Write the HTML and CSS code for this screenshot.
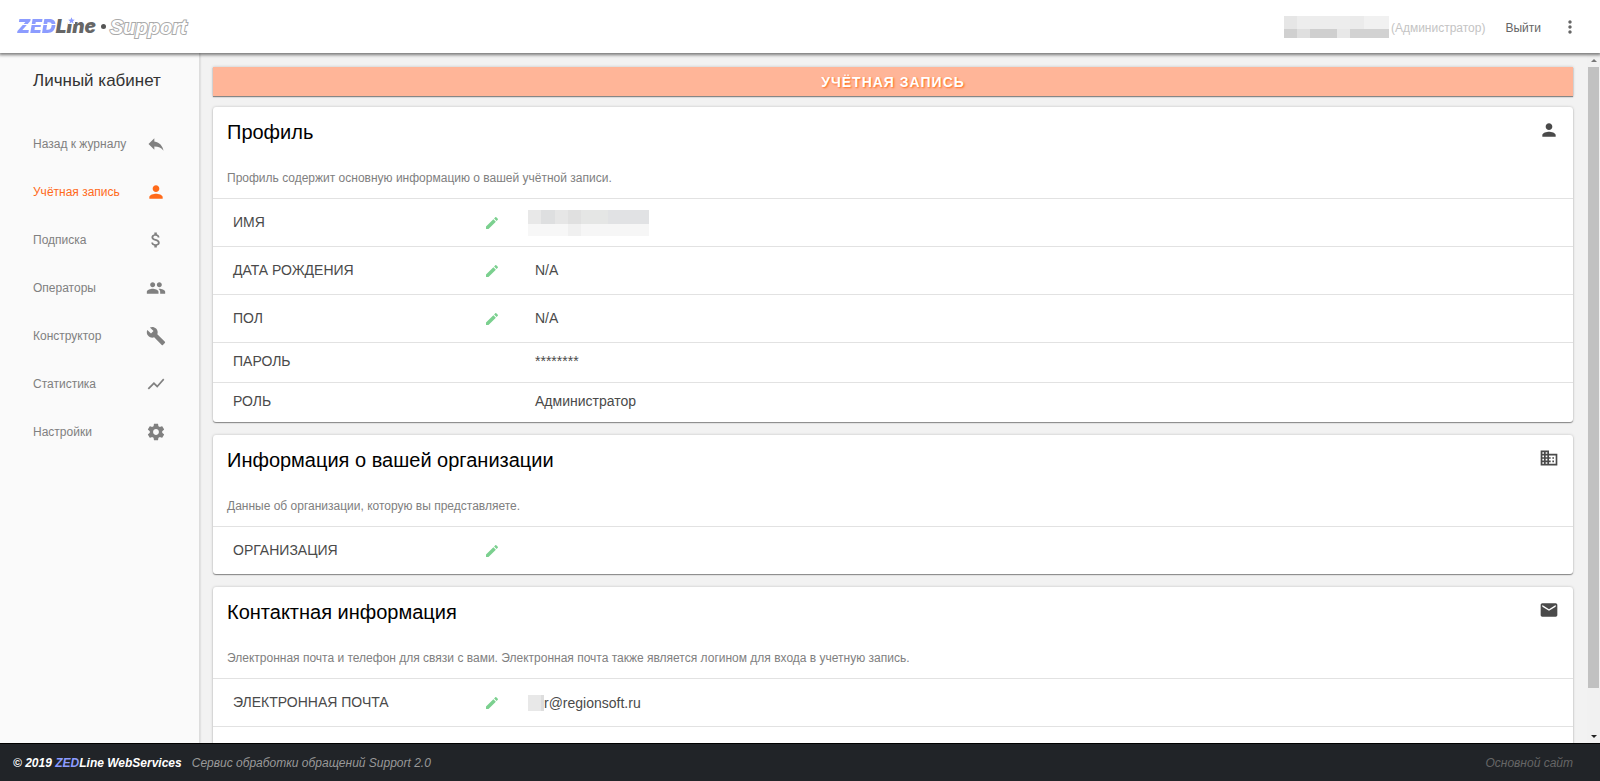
FILE: index.html
```html
<!DOCTYPE html>
<html lang="ru">
<head>
<meta charset="utf-8">
<title>ZEDLine Support</title>
<link rel="stylesheet" href="styles.css">
</head>
<body>
<svg class="sprite" aria-hidden="true">
  <symbol id="i-person" viewBox="0 0 24 24"><path d="M12 12c2.21 0 4-1.79 4-4s-1.79-4-4-4-4 1.79-4 4 1.79 4 4 4zm0 2c-2.67 0-8 1.34-8 4v2h16v-2c0-2.66-5.33-4-8-4z"/></symbol>
  <symbol id="i-reply" viewBox="0 0 24 24"><path d="M10 9V5l-7 7 7 7v-4.1c5 0 8.500 1.600 11 5.100-1-5-4-10-11-11z"/></symbol>
  <symbol id="i-money" viewBox="0 0 24 24"><path d="M11.800 10.900c-2.270-.59-3-1.200-3-2.150 0-1.090 1.010-1.850 2.700-1.850 1.780 0 2.440.85 2.500 2.100h2.210c-.07-1.720-1.120-3.300-3.210-3.810V3h-3v2.160c-1.940.42-3.500 1.680-3.500 3.610 0 2.310 1.910 3.460 4.700 4.130 2.500.6 3 1.480 3 2.410 0 .69-.49 1.790-2.700 1.790-2.060 0-2.870-.92-2.980-2.100h-2.200c.12 2.190 1.760 3.420 3.680 3.830V21h3v-2.150c1.950-.37 3.500-1.500 3.500-3.550 0-2.840-2.430-3.810-4.700-4.400z"/></symbol>
  <symbol id="i-people" viewBox="0 0 24 24"><path d="M16 11c1.660 0 2.990-1.340 2.990-3S17.660 5 16 5s-3 1.340-3 3 1.340 3 3 3zm-8 0c1.660 0 2.990-1.340 2.990-3S9.660 5 8 5 5 6.340 5 8s1.340 3 3 3zm0 2c-2.330 0-7 1.170-7 3.500V19h14v-2.500c0-2.330-4.670-3.500-7-3.500zm8 0c-.29 0-.62.02-.97.050 1.160.84 1.970 1.970 1.970 3.450V19h6v-2.500c0-2.330-4.670-3.500-7-3.500z"/></symbol>
  <symbol id="i-build" viewBox="0 0 24 24"><path d="M22.700 19l-9.100-9.100c.9-2.300.4-5-1.500-6.900-2-2-5-2.400-7.400-1.300L9 6 6 9 1.600 4.700C.4 7.100.9 10.100 2.900 12.100c1.900 1.900 4.600 2.400 6.900 1.500l9.100 9.100c.4.4 1 .4 1.400 0l2.300-2.300c.5-.4.5-1.100.1-1.400z"/></symbol>
  <symbol id="i-chart" viewBox="0 0 24 24"><path d="M3.500 18.490l6-6.010 4 4L22 6.920l-1.410-1.410-7.090 7.970-4-4L2 16.990z"/></symbol>
  <symbol id="i-settings" viewBox="0 0 24 24"><path d="M19.430 12.980c.04-.32.07-.64.07-.98s-.03-.66-.07-.98l2.110-1.650c.19-.15.24-.42.12-.64l-2-3.460c-.12-.22-.39-.3-.61-.22l-2.490 1c-.52-.4-1.080-.73-1.690-.98l-.38-2.650C14.460 2.180 14.250 2 14 2h-4c-.25 0-.46.18-.49.42l-.38 2.650c-.61.25-1.170.59-1.690.98l-2.490-1c-.23-.09-.49 0-.61.22l-2 3.460c-.13.22-.07.49.12.64l2.110 1.650c-.04.32-.07.65-.07.98s.03.66.07.98l-2.110 1.650c-.19.15-.24.42-.12.64l2 3.460c.12.22.39.3.61.22l2.490-1c.52.4 1.080.73 1.690.98l.38 2.650c.03.24.24.42.49.42h4c.25 0 .46-.18.49-.42l.38-2.650c.61-.25 1.170-.59 1.690-.98l2.490 1c.23.09.49 0 .61-.22l2-3.460c.12-.22.07-.49-.12-.64l-2.110-1.650zM12 15.500c-1.930 0-3.500-1.570-3.500-3.500s1.570-3.500 3.500-3.500 3.500 1.570 3.500 3.500-1.570 3.500-3.500 3.500z"/></symbol>
  <symbol id="i-edit" viewBox="0 0 24 24"><path d="M3 17.250V21h3.750L17.810 9.940l-3.750-3.750L3 17.250zM20.710 7.040c.39-.39.39-1.020 0-1.410l-2.340-2.340c-.39-.39-1.020-.39-1.410 0l-1.830 1.830 3.750 3.750 1.830-1.830z"/></symbol>
  <symbol id="i-business" viewBox="0 0 24 24"><path d="M12 7V3H2v18h20V7H12zM6 19H4v-2h2v2zm0-4H4v-2h2v2zm0-4H4V9h2v2zm0-4H4V5h2v2zm4 12H8v-2h2v2zm0-4H8v-2h2v2zm0-4H8V9h2v2zm0-4H8V5h2v2zm10 12h-8v-2h2v-2h-2v-2h2v-2h-2V9h8v10zm-2-8h-2v2h2v-2zm0 4h-2v2h2v-2z"/></symbol>
  <symbol id="i-mail" viewBox="0 0 24 24"><path d="M20 4H4c-1.100 0-1.990.9-1.990 2L2 18c0 1.100.9 2 2 2h16c1.100 0 2-.9 2-2V6c0-1.100-.9-2-2-2zm0 4l-8 5-8-5V6l8 5 8-5v2z"/></symbol>
  <symbol id="i-more" viewBox="0 0 24 24"><path d="M12 8c1.100 0 2-.9 2-2s-.9-2-2-2-2 .9-2 2 .9 2 2 2zm0 2c-1.100 0-2 .9-2 2s.9 2 2 2 2-.9 2-2-.9-2-2-2zm0 6c-1.100 0-2 .9-2 2s.9 2 2 2 2-.9 2-2-.9-2-2-2z"/></symbol>
  <symbol id="i-star" viewBox="0 0 24 24"><path d="M12 1l3.200 7.300 7.800.7-5.900 5.200 1.800 7.800L12 17.900 5.100 22l1.800-7.800L1 9l7.800-.7z"/></symbol>
</svg>

<header class="topbar">
  <a class="logo" href="#"><span class="logo-zed">ZED</span><span class="logo-line">L<span class="logo-i">i<svg class="logo-star"><use href="#i-star"/></svg></span>ne</span><span class="logo-dot"></span><span class="logo-support">Support</span></a>
  <div class="user">
    <span class="mask mask-user"></span>
    <span class="user-role">(Администратор)</span>
  </div>
  <a class="logout" href="#">Выйти</a>
  <button class="icon-button" type="button" aria-label="Меню"><svg class="icon"><use href="#i-more"/></svg></button>
</header>

<div class="body">
  <aside class="sidebar">
    <h1 class="sidebar-title">Личный кабинет</h1>
    <nav class="menu">
      <a class="menu-item" href="#">Назад к журналу<svg class="icon"><use href="#i-reply"/></svg></a>
      <a class="menu-item active" href="#">Учётная запись<svg class="icon"><use href="#i-person"/></svg></a>
      <a class="menu-item" href="#">Подписка<svg class="icon"><use href="#i-money"/></svg></a>
      <a class="menu-item" href="#">Операторы<svg class="icon"><use href="#i-people"/></svg></a>
      <a class="menu-item" href="#">Конструктор<svg class="icon"><use href="#i-build"/></svg></a>
      <a class="menu-item" href="#">Статистика<svg class="icon"><use href="#i-chart"/></svg></a>
      <a class="menu-item" href="#">Настройки<svg class="icon"><use href="#i-settings"/></svg></a>
    </nav>
  </aside>

  <main class="content">
    <h2 class="banner">УЧЁТНАЯ ЗАПИСЬ</h2>

    <section class="card">
      <div class="card-head">
        <h3 class="card-title">Профиль</h3>
        <svg class="icon"><use href="#i-person"/></svg>
      </div>
      <p class="card-note">Профиль содержит основную информацию о вашей учётной записи.</p>
      <dl class="fields">
        <div class="row"><dt>ИМЯ</dt><dd class="action"><button class="icon-button edit" type="button" aria-label="Изменить имя"><svg class="icon"><use href="#i-edit"/></svg></button></dd><dd class="masked"><span class="mask mask-name"></span></dd></div>
        <div class="row"><dt>ДАТА РОЖДЕНИЯ</dt><dd class="action"><button class="icon-button edit" type="button" aria-label="Изменить дату рождения"><svg class="icon"><use href="#i-edit"/></svg></button></dd><dd class="value">N/A</dd></div>
        <div class="row"><dt>ПОЛ</dt><dd class="action"><button class="icon-button edit" type="button" aria-label="Изменить пол"><svg class="icon"><use href="#i-edit"/></svg></button></dd><dd class="value">N/A</dd></div>
        <div class="row short"><dt>ПАРОЛЬ</dt><dd class="action"></dd><dd class="value">********</dd></div>
        <div class="row short"><dt>РОЛЬ</dt><dd class="action"></dd><dd class="value">Администратор</dd></div>
      </dl>
    </section>

    <section class="card">
      <div class="card-head">
        <h3 class="card-title">Информация о вашей организации</h3>
        <svg class="icon"><use href="#i-business"/></svg>
      </div>
      <p class="card-note">Данные об организации, которую вы представляете.</p>
      <dl class="fields">
        <div class="row"><dt>ОРГАНИЗАЦИЯ</dt><dd class="action"><button class="icon-button edit" type="button" aria-label="Изменить организацию"><svg class="icon"><use href="#i-edit"/></svg></button></dd><dd class="value"></dd></div>
      </dl>
    </section>

    <section class="card">
      <div class="card-head">
        <h3 class="card-title">Контактная информация</h3>
        <svg class="icon"><use href="#i-mail"/></svg>
      </div>
      <p class="card-note">Электронная почта и телефон для связи с вами. Электронная почта также является логином для входа в учетную запись.</p>
      <dl class="fields">
        <div class="row"><dt>ЭЛЕКТРОННАЯ ПОЧТА</dt><dd class="action"><button class="icon-button edit" type="button" aria-label="Изменить почту"><svg class="icon"><use href="#i-edit"/></svg></button></dd><dd class="masked"><span class="mask mask-mail"></span>r@regionsoft.ru</dd></div>
        <div class="row"></div>
      </dl>
    </section>
  </main>

  <div class="scrollbar" aria-hidden="true">
    <span class="arrow up"></span>
    <span class="thumb"></span>
    <span class="arrow down"></span>
  </div>
</div>

<footer class="footer">
  <strong class="copyright">© 2019 <span class="brand">ZED</span>Line WebServices</strong>
  <span class="service">Сервис обработки обращений Support 2.0</span>
  <a class="site-link" href="#">Основной сайт</a>
</footer>
</body>
</html>
```

FILE: styles.css
```css
* { box-sizing: border-box; }

body {
  margin: 0;
  height: 100vh;
  display: flex;
  flex-direction: column;
  overflow: hidden;
  font-family: "Liberation Sans", Arial, sans-serif;
  font-size: 14px;
  color: #4a4a4a;
  background: #f2f2f2;
}

h1, h2, h3, p, dl, dd { margin: 0; font-weight: normal; }
a { color: inherit; text-decoration: none; }

.sprite { display: none; }
.icon { display: block; flex: none; width: 20px; height: 20px; fill: currentColor; }

.icon-button {
  display: block;
  padding: 0;
  border: 0;
  background: none;
  color: #666;
}

/* Top bar */
.topbar {
  position: relative;
  z-index: 2;
  flex: none;
  display: flex;
  align-items: center;
  height: 53px;
  padding: 0 20px 0 17px;
  background: #fff;
  box-shadow: 0 1px 3px 1px rgba(0, 0, 0, 0.5);
  font-size: 12px;
}

.logo {
  display: flex;
  align-items: center;
  margin-right: auto;
  font-family: Inter, "Liberation Sans", sans-serif;
  font-size: 19px;
  line-height: 24px;
  font-style: italic;
  font-weight: 900;
}
.logo-zed {
  color: transparent;
  background: linear-gradient(#8c9cff 0 9px, #fff 9px 10px, #8c9cff 10px);
  background-clip: text;
  -webkit-background-clip: text;
}
.logo-line { color: #666; }
.logo-i { position: relative; }
.logo-star { position: absolute; top: 2px; left: 1px; width: 7px; height: 7px; fill: #8c9cff; background: #fff; }
.logo-dot { width: 5px; height: 5px; margin: 0 4px 0 5px; border-radius: 50%; background: #555; }
.logo-support {
  color: #fff;
  font-family: "Liberation Sans", Arial, sans-serif;
  font-size: 20px;
  font-weight: bold;
  -webkit-text-stroke: 2px #aaa;
  paint-order: stroke fill;
}

.user { display: flex; align-items: center; gap: 2px; margin-right: 20px; }
.user-role { padding-top: 2px; color: #c4c4c4; }
.logout { margin-right: 19px; padding-top: 2px; color: #666; }

/* Masked personal data */
.mask { flex: none; display: block; }
.mask-user {
  width: 105px;
  height: 22px;
  background:
    linear-gradient(90deg, #d0d0d0 0 13px, #dfdfdf 13px 26px, #cfcfcf 26px 53px, #e8e8e8 53px 66px, #d2d2d2 66px) 0 100% / 100% 9px no-repeat,
    linear-gradient(90deg, #e6e6e6 0 13px, #ededed 13px 66px, #ebebeb 66px 80px, #f1f1f1 80px);
}
.mask-name {
  width: 121px;
  height: 26px;
  background:
    linear-gradient(90deg, #f7f7f7 0 40px, #f0f0f0 40px 53px, #f6f6f6 53px) 0 100% / 100% 12px no-repeat,
    linear-gradient(90deg, #e8e8e8 0 13px, #dedfe0 13px 27px, #e6e6e6 27px 40px, #e0e0e0 40px 53px, #e5e6e5 53px 80px, #e1e2e4 80px);
}
.mask-mail {
  width: 16px;
  height: 16px;
  background: linear-gradient(90deg, #e8e8e8 0 13px, #ddd 13px);
}

/* Page body */
.body { flex: 1; min-height: 0; display: flex; }

.sidebar {
  flex: none;
  width: 200px;
  padding: 17px 33px 0;
  background: #fafafa;
  border-right: 1px solid #ddd;
  box-shadow: 0 0 2px rgba(0, 0, 0, 0.2);
}
.sidebar-title { margin-bottom: 29px; font-size: 17px; line-height: 21px; color: #333; white-space: nowrap; }
.menu-item {
  display: flex;
  align-items: center;
  justify-content: space-between;
  height: 48px;
  font-size: 12px;
  color: #808080;
  white-space: nowrap;
}
.menu-item.active { color: #ff6a1a; }

.content { flex: 1; min-width: 0; overflow: hidden; padding: 14px 14px 0 13px; }

.banner {
  height: 29px;
  margin-bottom: 11px;
  background: #ffb598;
  box-shadow: 0 1px 1px rgba(0, 0, 0, 0.4), 0 0 3px rgba(0, 0, 0, 0.2);
  color: #fff;
  font-size: 14px;
  font-weight: bold;
  line-height: 30px;
  letter-spacing: 1px;
  text-align: center;
  text-shadow: 1px 1px 2px #ff6a1a;
}

.card {
  margin-bottom: 13px;
  border-radius: 3px;
  background: #fff;
  box-shadow: 0 1px 1px rgba(0, 0, 0, 0.4), 0 0 3px rgba(0, 0, 0, 0.2);
}
.card-head { display: flex; justify-content: space-between; padding: 13px 14px 0 14px; }
.card-title { font-size: 20px; line-height: 24px; color: #000; }
.card-note { padding: 27px 14px 12px; font-size: 12px; line-height: 15px; color: #808080; }
.row {
  display: flex;
  align-items: center;
  height: 48px;
  border-top: 1px solid #e2e2e2;
}
.row.short { height: 40px; }
.row dt { width: 271px; padding: 0 0 2px 20px; }
.row .action { width: 44px; }
.row .value { padding: 0 0 2px 7px; }
.row.short dt, .row.short .value { padding-bottom: 4px; }
.row .masked { display: flex; align-items: center; }
.edit { color: #7bd08f; }
.edit .icon { width: 16px; height: 16px; }

/* Scroll bar of the content area */
.scrollbar {
  flex: none;
  width: 13px;
  display: flex;
  flex-direction: column;
  align-items: center;
  background: #f1f1f1;
}
.arrow { flex: none; height: 14px; display: flex; align-items: center; }
.arrow::before { content: ""; border: 3px solid transparent; }
.up::before { border-top: 0; border-bottom-color: #777; }
.down::before { border-bottom: 0; border-top-color: #222; }
.thumb { width: 11px; height: 90%; margin-bottom: auto; background: #c1c1c1; }

/* Footer */
.footer {
  position: relative;
  z-index: 1;
  flex: none;
  display: flex;
  align-items: center;
  height: 38px;
  padding: 0 27px 0 13px;
  border-top: 1px solid #000;
  background: #212428;
  font-size: 12px;
  font-style: italic;
}
.copyright { color: #fff; }
.brand { color: #8c9cff; }
.service { margin-left: 10px; color: #999; }
.site-link { margin-left: auto; color: #666; }
```
